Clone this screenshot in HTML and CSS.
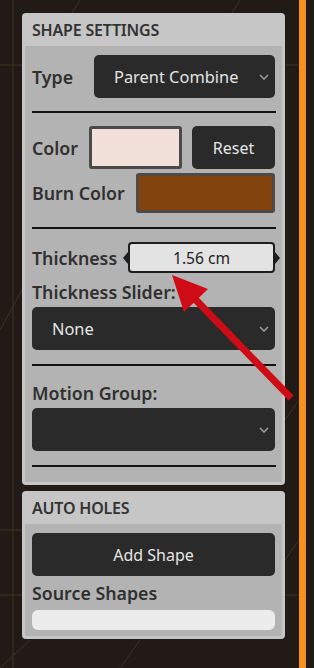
FILE: index.html
```html
<!DOCTYPE html>
<html>
<head>
<meta charset="utf-8">
<link rel="stylesheet" href="styles.css">
</head>
<body>
<svg class="bg-grid" width="314" height="668" viewBox="0 0 314 668">
  <g stroke="#4a3f25" stroke-width="1" fill="none" opacity="0.7">
    <line x1="13" y1="0" x2="13" y2="668"/>
    <line x1="0" y1="65" x2="22" y2="65"/>
    <line x1="285" y1="65" x2="299" y2="65"/>
    <line x1="0" y1="530" x2="22" y2="530"/>
    <line x1="0" y1="595" x2="22" y2="595"/>
    <line x1="285" y1="595" x2="299" y2="595"/>
    <line x1="80" y1="0" x2="72" y2="13"/>
    <line x1="240" y1="0" x2="232" y2="13"/>
    <line x1="0" y1="330" x2="22" y2="290"/>
    <line x1="0" y1="668" x2="30" y2="640"/>
    <line x1="120" y1="668" x2="140" y2="640"/>
    <line x1="285" y1="420" x2="299" y2="400"/>
    <line x1="285" y1="560" x2="299" y2="540"/>
  </g>
</svg>
<div class="layout">
  <div class="column">
    <section class="panel">
      <div class="panel-head">SHAPE SETTINGS</div>
      <div class="panel-body body-shape">
        <div class="row row-type">
          <span class="label label-type">Type</span>
          <div class="select select-type"><span>Parent Combine</span>
            <svg class="chev" width="10" height="6" viewBox="0 0 10 6"><polyline points="1,1 5,5 9,1" fill="none" stroke="#9a9a9a" stroke-width="1.6"/></svg>
          </div>
        </div>
        <div class="sep sep-1"></div>
        <div class="row row-color">
          <span class="label label-color">Color</span>
          <div class="swatch swatch-color"></div>
          <div class="btn btn-reset">Reset</div>
        </div>
        <div class="row row-burn">
          <span class="label label-burn">Burn Color</span>
          <div class="swatch swatch-burn"></div>
        </div>
        <div class="sep sep-2"></div>
        <div class="row row-thick">
          <span class="label label-thick">Thickness</span>
          <div class="numfield">
            <span class="knob knob-l"></span>
            <span>1.56 cm</span>
            <span class="knob knob-r"></span>
          </div>
        </div>
        <div class="label label-block label-slider">Thickness Slider:</div>
        <div class="select select-wide"><span>None</span>
          <svg class="chev" width="10" height="6" viewBox="0 0 10 6"><polyline points="1,1 5,5 9,1" fill="none" stroke="#9a9a9a" stroke-width="1.6"/></svg>
        </div>
        <div class="sep sep-3"></div>
        <div class="label label-block label-motion">Motion Group:</div>
        <div class="select select-wide"><span></span>
          <svg class="chev" width="10" height="6" viewBox="0 0 10 6"><polyline points="1,1 5,5 9,1" fill="none" stroke="#9a9a9a" stroke-width="1.6"/></svg>
        </div>
        <div class="sep sep-4"></div>
      </div>
    </section>
    <section class="panel panel-holes">
      <div class="panel-head">AUTO HOLES</div>
      <div class="panel-body body-holes">
        <div class="btn btn-add">Add Shape</div>
        <div class="label label-block label-source">Source Shapes</div>
        <div class="listbox"></div>
      </div>
    </section>
  </div>
  <div class="orange-bar"></div>
</div>
<svg class="arrow" width="314" height="668" viewBox="0 0 314 668">
  <line x1="194" y1="298" x2="291" y2="398" stroke="#cf0c16" stroke-width="7"/>
  <polygon points="172,275 184,312 208,289" fill="#cf0c16"/>
</svg>
</body>
</html>
```
FILE: styles.css
```css
* { box-sizing: border-box; }
html, body {
  margin: 0;
  padding: 0;
  width: 314px;
  height: 668px;
  overflow: hidden;
  background: #221a16;
  font-family: "Noto Sans", "Open Sans", sans-serif;
}
.bg-grid {
  position: absolute;
  left: 0;
  top: 0;
}
.layout {
  position: relative;
  display: flex;
  height: 668px;
}
.column {
  margin-left: 22px;
  padding-top: 13px;
  width: 263px;
  display: flex;
  flex-direction: column;
  gap: 6px;
}
.orange-bar {
  margin-left: 14px;
  width: 7px;
  height: 668px;
  background: #f7921e;
}
.panel {
  background: #c6c6c6;
  border-radius: 4px;
  padding: 0 3px 3px;
}
.panel-head {
  height: 33px;
  padding-left: 7px;
  display: flex;
  align-items: center;
  font-size: 16px;
  font-weight: 600;
  color: #333;
  letter-spacing: -0.2px;
}
.panel-body {
  background: #b3b3b3;
  padding: 9px 7px 0;
}
.body-shape { height: 436px; }
.body-holes { padding-bottom: 6px; }
.row {
  display: flex;
  align-items: center;
}
.label {
  font-size: 17.8px;
  font-weight: 600;
  color: #303030;
  line-height: 22px;
}
.label-type { width: 62px; }
.select {
  background: #2a2a2a;
  border-radius: 5px;
  height: 43px;
  display: flex;
  align-items: center;
  justify-content: space-between;
  padding: 0 6px 0 20px;
  color: #e4e4e4;
  font-size: 16.4px;
}
.select-type { width: 181px; }
.select-wide { width: 243px; }
.sep {
  height: 2px;
  background: #141414;
  width: 244px;
}
.sep-1 { margin-top: 13px; }
.row-color { margin-top: 13px; height: 43px; }
.label-color { width: 57px; }
.swatch {
  border: 3px solid #4a4a4a;
  border-radius: 3px;
}
.swatch-color {
  width: 93px;
  height: 43px;
  background: #f2e0db;
}
.btn {
  background: #2a2a2a;
  border-radius: 5px;
  color: #e6e6e6;
  font-size: 16px;
  display: flex;
  align-items: center;
  justify-content: center;
}
.btn-reset {
  margin-left: 10px;
  width: 83px;
  height: 43px;
}
.row-burn { margin-top: 4px; height: 40px; }
.label-burn { width: 104px; }
.swatch-burn {
  width: 139px;
  height: 40px;
  background: #83430f;
  border-color: #4f4a45;
}
.sep-2 { margin-top: 14px; }
.row-thick { margin-top: 13px; height: 31px; }
.label-thick { width: 96px; }
.numfield {
  position: relative;
  width: 147px;
  height: 31px;
  background: #e3e3e3;
  border: 2px solid #1e1e1e;
  border-radius: 4px;
  display: flex;
  align-items: center;
  justify-content: center;
  font-size: 15.6px;
  color: #222;
}
.knob {
  position: absolute;
  top: 50%;
  width: 0;
  height: 0;
  border-top: 6px solid transparent;
  border-bottom: 6px solid transparent;
  transform: translateY(-50%);
}
.knob-l { left: -7px; border-right: 5px solid #1e1e1e; }
.knob-r { right: -7px; border-left: 5px solid #1e1e1e; }
.label-block { display: block; }
.label-slider { margin-top: 8px; margin-bottom: 4px; }
.sep-3 { margin-top: 14px; }
.label-motion { margin-top: 16px; margin-bottom: 4px; }
.sep-4 { margin-top: 14px; }
.btn-add {
  width: 243px;
  height: 43px;
}
.label-source { margin-top: 6px; margin-bottom: 6px; }
.listbox {
  width: 243px;
  height: 20px;
  background: #ececec;
  border-radius: 6px;
}
.arrow {
  position: absolute;
  left: 0;
  top: 0;
  pointer-events: none;
}
```
